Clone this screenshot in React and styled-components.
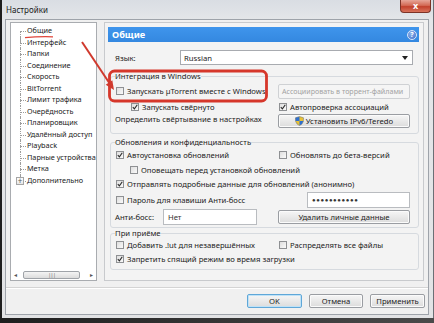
import React from 'react';
import styled, { createGlobalStyle } from 'styled-components';

const Global = createGlobalStyle`
  html, body { margin: 0; padding: 0; background: #2a2a2a; }
  body { font-family: "Noto Sans", "Open Sans", sans-serif; color: #222; }
  * { box-sizing: border-box; }
`;

const FS = '7.7px';

const Screen = styled.div`
  position: relative;
  width: 434px;
  height: 323px;
  overflow: hidden;
  background: linear-gradient(to right, #1e1e1e, #3a3a3a 60%, #4a4a4a);
`;

const Frame = styled.div`
  margin-left: 2px;
  width: 432px;
  height: 318px;
  display: flex;
  flex-direction: column;
  background: linear-gradient(to bottom, #d9dde3, #e4e6e9 20px, #e2e3e5);
  border-right: 1px solid #6b6f75;
`;

const TitleBar = styled.div`
  height: 19px;
  display: flex;
  align-items: flex-start;
  justify-content: space-between;
  padding-left: 4px;
`;

const Title = styled.span`
  font-size: 8px;
  line-height: 19px;
  color: #1a1a1a;
`;

const CloseBtn = styled.div`
  width: 31px;
  height: 13px;
  margin-right: 2px;
  border: 1px solid #7d3327;
  border-top: none;
  border-radius: 0 0 4px 4px;
  background: linear-gradient(to bottom, #e7a699, #d36a55 45%, #c2412c 55%, #d8735c);
  color: #fff;
  font-size: 9px;
  font-weight: bold;
  line-height: 11px;
  text-align: center;
`;

const Client = styled.div`
  flex: 1;
  margin: 0 4px 3px 3px;
  border: 1px solid #9ea3aa;
  background: #f0f0f0;
  display: flex;
  flex-direction: column;
`;

const Main = styled.div`
  display: flex;
  padding: 2px 4px 0 4px;
  gap: 7px;
`;

const Tree = styled.div`
  width: 87px;
  height: 259px;
  border: 1px solid #a9acb0;
  background: #fff;
  display: flex;
  flex-direction: column;
`;

const TreeList = styled.ul`
  list-style: none;
  margin: 0;
  padding: 2px 0 0 16px;
  flex: 1;
  overflow: hidden;
`;

const TreeItem = styled.li`
  position: relative;
  font-size: 7.3px;
  line-height: 11.5px;
  height: 11.5px;
  white-space: nowrap;
  &::before {
    content: '';
    position: absolute;
    left: -7px;
    top: 6px;
    width: 6px;
    border-top: 1px dotted #9c9c9c;
  }
  &::after {
    content: '';
    position: absolute;
    left: -7px;
    top: ${(p) => (p.$first ? '6px' : '0')};
    height: ${(p) => (p.$last ? '6px' : '11.5px')};
    border-left: 1px dotted #9c9c9c;
  }
`;

const Expander = styled.span`
  position: absolute;
  left: -11px;
  top: 2px;
  width: 8px;
  height: 8px;
  border: 1px solid #a5a5a5;
  background: linear-gradient(#fff, #e6e6e6);
  font-size: 8px;
  line-height: 6px;
  text-align: center;
  color: #555;
  z-index: 1;
`;

const HScroll = styled.div`
  height: 9px;
  margin: 0 0 1px 0;
  display: flex;
  align-items: center;
  padding: 0 3px;
  gap: 2px;
  font-size: 6px;
  color: #555;
`;

const Thumb = styled.div`
  flex: 1;
  margin: 0 8px 0 4px;
  height: 8px;
  border: 1px solid #9fa3a8;
  border-radius: 2px;
  background: linear-gradient(#f4f4f4, #dcdcdc);
  font-size: 6px;
  line-height: 6px;
  text-align: center;
  color: #777;
  letter-spacing: -1px;
`;

const Panel = styled.div`
  flex: 1;
  height: 259px;
  border: 1px solid #c8cacd;
  background: #f3f3f3;
  padding: 4px 4px 0 3px;
`;

const Header = styled.div`
  height: 15px;
  background: linear-gradient(#3f95ec, #3488e0);
  display: flex;
  align-items: center;
  justify-content: space-between;
  padding: 0 2px 0 4px;
  color: #fff;
  font-weight: bold;
  font-size: 9.2px;
`;

const Help = styled.span`
  width: 10px;
  height: 10px;
  border-radius: 50%;
  border: 1px solid #d8e6fa;
  background: radial-gradient(circle at 40% 35%, #8db4ee, #3e6dc6);
  font-size: 7px;
  line-height: 8px;
  text-align: center;
  color: #fff;
`;

const LangRow = styled.div`
  display: flex;
  align-items: center;
  height: 15px;
  margin: 8px 6px 0 7px;
`;

const Text = styled.span`
  font-size: ${FS};
  line-height: 10px;
  white-space: nowrap;
  color: #222;
  width: ${(p) => (p.$w ? `${p.$w}px` : 'auto')};
  flex: none;
`;

const Select = styled.div`
  flex: 1;
  height: 15px;
  border: 1px solid #a8abb0;
  background: #fff;
  display: flex;
  align-items: center;
  justify-content: space-between;
  padding: 0 4px 0 3px;
`;

const Caret = styled.span`
  width: 0;
  height: 0;
  border-left: 3px solid transparent;
  border-right: 3px solid transparent;
  border-top: 4px solid #222;
`;

const Group = styled.fieldset`
  margin: ${(p) => p.$mt}px 0 0 2px;
  padding: 0 7px ${(p) => p.$pb}px 4px;
  border: 1px solid #d6dadf;
  border-radius: 3px;
`;

const Legend = styled.legend`
  padding: 0;
  font-size: ${FS};
  line-height: 10px;
  color: #222;
`;

const Row = styled.div`
  display: grid;
  grid-template-columns: 163px 132px;
  align-items: ${(p) => p.$align || 'center'};
  height: ${(p) => p.$h}px;
  margin-top: ${(p) => p.$mt || 0}px;
`;

const Cell = styled.div`
  display: flex;
  align-items: center;
  padding-left: ${(p) => p.$indent || 0}px;
  justify-content: ${(p) => (p.$end ? 'flex-end' : 'flex-start')};
`;

const Box = styled.span`
  width: 8px;
  height: 8px;
  margin: 0 3px 0 1px;
  border: 1px solid #8e9093;
  background: linear-gradient(135deg, #dedede, #fafafa);
  display: inline-flex;
  align-items: center;
  justify-content: center;
  flex: none;
`;

const Button = styled.div`
  height: 14px;
  width: ${(p) => (p.$w ? `${p.$w}px` : '100%')};
  border: 1px solid ${(p) => (p.$default ? '#5fa7d8' : '#9a9da2')};
  border-radius: 2px;
  background: linear-gradient(#f6f6f6, #e9e9e9 50%, #dcdcdc);
  box-shadow: ${(p) => (p.$default ? 'inset 0 0 0 1px #bfe2f7' : 'inset 0 0 0 1px #fbfbfb')};
  display: flex;
  align-items: center;
  justify-content: center;
  gap: 2px;
  font-size: ${FS};
  color: #222;
  white-space: nowrap;
`;

const Disabled = styled.div`
  height: 15px;
  width: 100%;
  border: 1px solid #cfd1d4;
  border-radius: 2px;
  background: #f5f5f5;
  display: flex;
  align-items: center;
  padding-left: 3px;
  font-size: 7.1px;
  color: #a2a2a2;
  white-space: nowrap;
  overflow: hidden;
`;

const Field = styled.div`
  height: 16px;
  width: ${(p) => p.$w}px;
  border: 1px solid #b9bcc0;
  background: #fff;
  display: flex;
  align-items: center;
  padding-left: 4px;
  font-size: ${(p) => (p.$dots ? '6px' : FS)};
  letter-spacing: ${(p) => (p.$dots ? '0.6px' : '0')};
  color: #333;
`;

const Footer = styled.div`
  margin-top: 6px;
  border-top: 1px solid #d4d4d4;
  box-shadow: inset 0 1px 0 #fff;
  padding: 6px 3px 0 0;
  display: flex;
  justify-content: flex-end;
  gap: 7px;
`;

const Overlay = styled.svg`
  position: absolute;
  left: 0;
  top: 0;
  pointer-events: none;
`;

const Check = ({ on }) => (
  <Box>
    {on && (
      <svg width="6" height="6" viewBox="0 0 6 6">
        <path d="M0.8 3.2 L2.4 4.9 L5.3 0.8" fill="none" stroke="#2b2b2b" strokeWidth="1.1" />
      </svg>
    )}
  </Box>
);

const CheckLabel = ({ on, children, indent }) => (
  <Cell $indent={indent}>
    <Check on={on} />
    <Text>{children}</Text>
  </Cell>
);

const Shield = () => (
  <svg width="9" height="10" viewBox="0 0 9 10">
    <path d="M4.5 0.5 L8.5 1.8 L8.3 5.5 Q7.6 8.3 4.5 9.6 Q1.4 8.3 0.7 5.5 L0.5 1.8 Z" fill="#e8c236" stroke="#6b6b6b" strokeWidth="0.5" />
    <path d="M4.5 0.7 L4.5 5 L0.6 5 L0.5 1.8 Z" fill="#2f6fcf" />
    <path d="M4.5 5 L8.4 5 Q7.6 8.3 4.5 9.5 Z" fill="#2f6fcf" />
  </svg>
);

const treeItems = [
  'Общие', 'Интерфейс', 'Папки', 'Соединение', 'Скорость', 'BitTorrent',
  'Лимит трафика', 'Очерёдность', 'Планировщик', 'Удалённый доступ',
  'Playback', 'Парные устройства', 'Метка', 'Дополнительно',
];

export default function App() {
  return (
    <>
      <Global />
      <Screen>
        <Frame>
          <TitleBar>
            <Title>Настройки</Title>
            <CloseBtn>x</CloseBtn>
          </TitleBar>
          <Client>
            <Main>
              <Tree>
                <TreeList>
                  {treeItems.map((t, i) => (
                    <TreeItem key={t} $first={i === 0} $last={i === treeItems.length - 1}>
                      {i === treeItems.length - 1 && <Expander>+</Expander>}
                      {t}
                    </TreeItem>
                  ))}
                </TreeList>
                <HScroll>
                  <span>◂</span>
                  <Thumb>|||</Thumb>
                  <span>▸</span>
                </HScroll>
              </Tree>
              <Panel>
                <Header>
                  Общие
                  <Help>?</Help>
                </Header>
                <LangRow>
                  <Text $w={65}>Язык:</Text>
                  <Select>
                    <Text>Russian</Text>
                    <Caret />
                  </Select>
                </LangRow>

                <Group $mt={6} $pb={3}>
                  <Legend>Интеграция в Windows</Legend>
                  <Row $h={16} $mt={2}>
                    <CheckLabel>Запускать µTorrent вместе с Windows</CheckLabel>
                    <Disabled>Ассоциировать в торрент-файлами</Disabled>
                  </Row>
                  <Row $h={15}>
                    <CheckLabel on indent={15}>Запускать свёрнуто</CheckLabel>
                    <CheckLabel on>Автопроверка ассоциаций</CheckLabel>
                  </Row>
                  <Row $h={16} $align="start">
                    <Cell>
                      <Text>Определить свёртывание в настройках</Text>
                    </Cell>
                    <Button>
                      <Shield />
                      Установить IPv6/Teredo
                    </Button>
                  </Row>
                </Group>

                <Group $mt={3} $pb={1}>
                  <Legend>Обновления и конфиденциальность</Legend>
                  <Row $h={14} $mt={1}>
                    <CheckLabel on>Автоустановка обновлений</CheckLabel>
                    <CheckLabel>Обновлять до бета-версий</CheckLabel>
                  </Row>
                  <Row $h={15}>
                    <CheckLabel indent={14}>Оповещать перед установкой обновлений</CheckLabel>
                    <span />
                  </Row>
                  <Row $h={14}>
                    <CheckLabel on>Отправлять подробные данные для обновлений (анонимно)</CheckLabel>
                    <span />
                  </Row>
                  <Row $h={17}>
                    <CheckLabel>Пароль для клавиши Анти-босс</CheckLabel>
                    <Cell $end>
                      <Field $w={103} $dots>●●●●●●●●●●●</Field>
                    </Cell>
                  </Row>
                  <Row $h={18}>
                    <Cell>
                      <Text $w={48}>Анти-босс:</Text>
                      <Field $w={94}>Нет</Field>
                    </Cell>
                    <Button>Удалить личные данные</Button>
                  </Row>
                </Group>

                <Group $mt={0} $pb={2}>
                  <Legend>При приёме</Legend>
                  <Row $h={13}>
                    <CheckLabel>Добавить .!ut для незавершённых</CheckLabel>
                    <CheckLabel>Распределять все файлы</CheckLabel>
                  </Row>
                  <Row $h={16}>
                    <CheckLabel on>Запретить спящий режим во время загрузки</CheckLabel>
                    <span />
                  </Row>
                </Group>
              </Panel>
            </Main>
            <Footer>
              <Button $w={55} $default>OK</Button>
              <Button $w={54}>Отмена</Button>
              <Button $w={55}>Применить</Button>
            </Footer>
          </Client>
        </Frame>

        <Overlay width="434" height="323" viewBox="0 0 434 323">
          <path d="M25 37.6 Q38 36.4 53 36.8" fill="none" stroke="#e0463b" strokeWidth="1.2" />
          <rect x="109.5" y="71" width="157" height="30" rx="5" fill="none" stroke="#d6372b" strokeWidth="2.8" />
          <line x1="82" y1="42" x2="109" y2="82.5" stroke="#d0392d" strokeWidth="2" />
          <polygon points="114,90 105.7,84.7 112.3,80.3" fill="#d0392d" />
        </Overlay>
      </Screen>
    </>
  );
}
